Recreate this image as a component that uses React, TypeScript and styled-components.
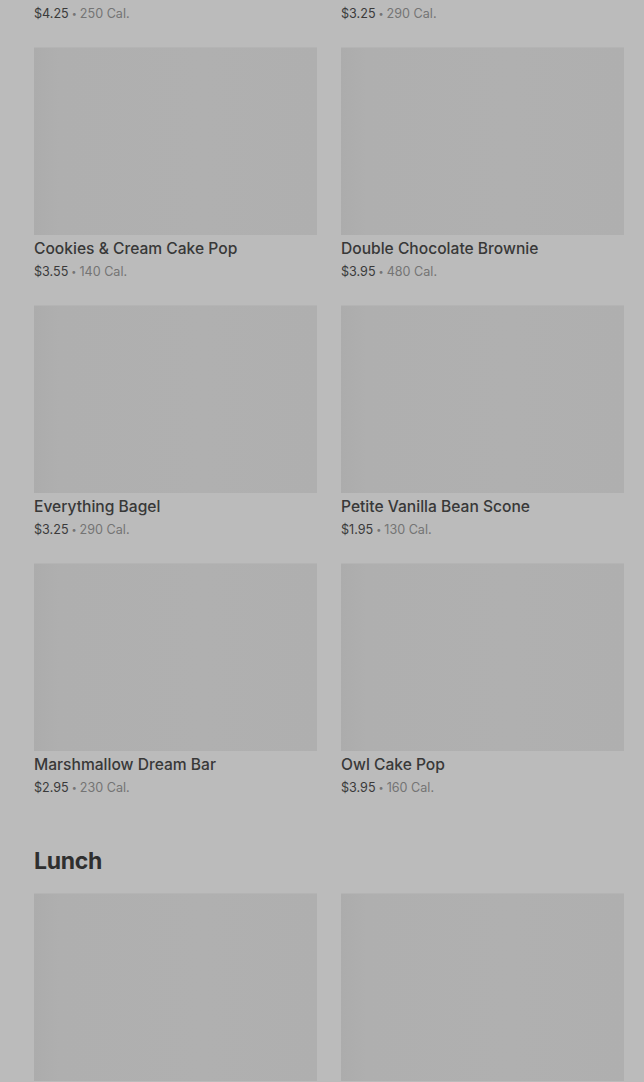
import React from 'react';
import styled, { createGlobalStyle } from 'styled-components';

const GlobalStyle = createGlobalStyle`
  html, body {
    margin: 0;
    padding: 0;
    background: #bbbbbb;
    overflow: hidden;
  }
  body {
    font-family: Inter, "Noto Sans", "Liberation Sans", sans-serif;
  }
`;

const Page = styled.div`
  height: 1082px;
  overflow: hidden;
  background: #bbbbbb;
  padding: 0 20px 0 34px;
`;

const Shift = styled.div`
  margin-top: -211px;
`;

const Section = styled.section<{ $spaced?: boolean }>`
  margin-top: ${props => (props.$spaced ? '48px' : '0')};
`;

const SectionTitle = styled.h2`
  margin: 0 0 16px;
  font-size: 23px;
  line-height: 32px;
  font-weight: 700;
  color: #2f2f2f;
  letter-spacing: -0.3px;
`;

const Grid = styled.div`
  display: grid;
  grid-template-columns: 283px 283px;
  column-gap: 24px;
  row-gap: 24px;
`;

const Card = styled.div`
  display: flex;
  flex-direction: column;
`;

const Thumb = styled.div`
  height: 188px;
  background: linear-gradient(90deg, #acacac 0%, #afafaf 9%, #b0b0b0 60%, #afafaf 100%);
  border-top: 1px solid #b4b4b4;
  box-sizing: border-box;
`;

const Name = styled.div`
  margin-top: 3px;
  font-size: 15.6px;
  line-height: 22px;
  font-weight: 500;
  color: #383838;
`;

const Meta = styled.div`
  margin-top: 3px;
  font-size: 12.6px;
  line-height: 18px;
  color: #747474;
`;

const Price = styled.span`
  color: #3a3a3a;
`;

const Dot = styled.span`
  font-size: 9px;
  margin: 0 3px;
  vertical-align: 1px;
`;

interface Item {
  name: string;
  price: string;
  cal: string;
}

const bakery: Item[] = [
  { name: 'Chocolate Croissant', price: '$4.25', cal: '250 Cal.' },
  { name: 'Blueberry Muffin', price: '$3.25', cal: '290 Cal.' },
  { name: 'Cookies & Cream Cake Pop', price: '$3.55', cal: '140 Cal.' },
  { name: 'Double Chocolate Brownie', price: '$3.95', cal: '480 Cal.' },
  { name: 'Everything Bagel', price: '$3.25', cal: '290 Cal.' },
  { name: 'Petite Vanilla Bean Scone', price: '$1.95', cal: '130 Cal.' },
  { name: 'Marshmallow Dream Bar', price: '$2.95', cal: '230 Cal.' },
  { name: 'Owl Cake Pop', price: '$3.95', cal: '160 Cal.' },
];

const lunch: Item[] = [
  { name: 'Turkey & Havarti Sandwich', price: '$6.95', cal: '510 Cal.' },
  { name: 'Chicken & Hummus Protein Box', price: '$6.25', cal: '310 Cal.' },
];

const ItemCard: React.FC<{ item: Item }> = ({ item }) => (
  <Card>
    <Thumb />
    <Name>{item.name}</Name>
    <Meta>
      <Price>{item.price}</Price>
      <Dot>•</Dot>
      {item.cal}
    </Meta>
  </Card>
);

const App: React.FC = () => {
  return (
    <>
      <GlobalStyle />
      <Page>
        <Shift>
          <Section>
            <Grid>
              {bakery.map(item => (
                <ItemCard key={item.name} item={item} />
              ))}
            </Grid>
          </Section>
          <Section $spaced>
            <SectionTitle>Lunch</SectionTitle>
            <Grid>
              {lunch.map(item => (
                <ItemCard key={item.name} item={item} />
              ))}
            </Grid>
          </Section>
        </Shift>
      </Page>
    </>
  );
};

export default App;
